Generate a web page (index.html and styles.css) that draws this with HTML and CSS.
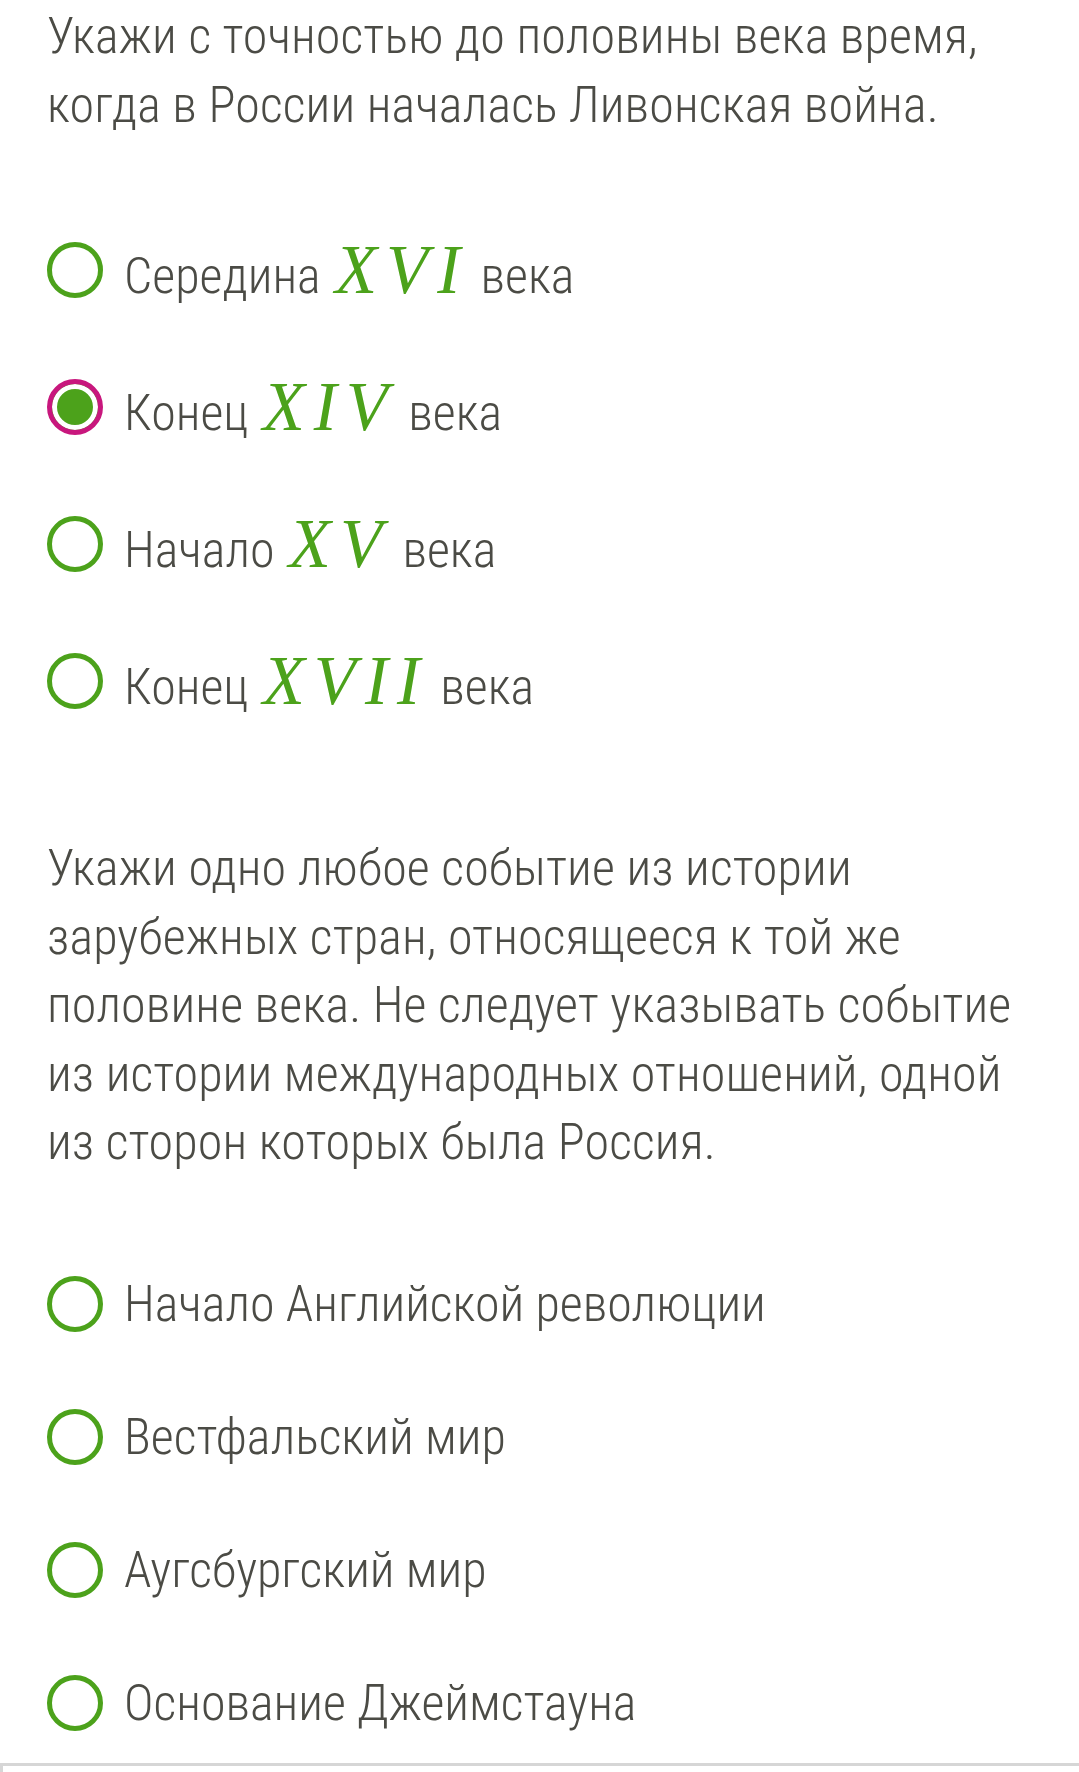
FILE: index.html
```html
<!DOCTYPE html>
<html lang="ru">
<head>
	<meta charset="UTF-8">
	<meta name="viewport" content="width=device-width,initial-scale=1">
	<title>Задание</title>
	<link rel="stylesheet" href="styles.css">
</head>
<body>
	<main class="task">
		<p class="question">Укажи с точностью до половины века время, когда в России началась Ливонская война.</p>

		<ul class="opts opts-math">
			<li class="opt"><span class="radio"></span><span class="label">Середина <span class="m">XVI</span> века</span></li>
			<li class="opt"><span class="radio checked"></span><span class="label">Конец <span class="m">XIV</span> века</span></li>
			<li class="opt"><span class="radio"></span><span class="label">Начало <span class="m">XV</span> века</span></li>
			<li class="opt"><span class="radio"></span><span class="label">Конец <span class="m">XVII</span> века</span></li>
		</ul>

		<p class="question q2">Укажи одно любое событие из истории зарубежных стран, относящееся к той же половине века. Не следует указывать событие из истории международных отношений, одной из сторон которых была Россия.</p>

		<ul class="opts opts-plain">
			<li class="opt"><span class="radio"></span><span class="label">Начало Английской революции</span></li>
			<li class="opt"><span class="radio"></span><span class="label">Вестфальский мир</span></li>
			<li class="opt"><span class="radio"></span><span class="label">Аугсбургский мир</span></li>
			<li class="opt"><span class="radio"></span><span class="label">Основание Джеймстауна</span></li>
		</ul>
	</main>

	<div class="field"></div>
</body>
</html>
```

FILE: styles.css
```css
html, body {
	margin: 0;
	background: #fff;
}

body {
	font-family: 'Roboto', 'Noto Sans', sans-serif;
	font-weight: 300;
	font-stretch: 87.5%;
	color: #4b4b45;
	overflow: hidden;
}

.task {
	padding: 2px 47px 0;
}

.question {
	margin: 0;
	font-size: 50px;
	line-height: 68.5px;
	letter-spacing: 0.15px;
}

.q2 {
	margin-top: 125px;
}

.opts {
	display: flex;
	flex-direction: column;
	margin: 0;
	padding: 0;
	list-style: none;
}

.opts-math {
	margin-top: 103px;
	gap: 81px;
}

.opts-plain {
	margin-top: 99px;
	gap: 77px;
}

.opt {
	display: flex;
	align-items: center;
	gap: 21px;
	height: 56px;
}

.radio {
	box-sizing: border-box;
	flex: none;
	width: 56px;
	height: 56px;
	border: 5px solid #4ca21b;
	border-radius: 50%;
}

.radio.checked {
	border-color: #c8177d;
	background: #4ca21b;
	box-shadow: inset 0 0 0 5px #fff;
}

.label {
	font-size: 50px;
	line-height: 56px;
	white-space: nowrap;
}

/* roman numerals set like formula text */
.m {
	font-family: 'Liberation Serif', 'DejaVu Serif', serif;
	font-style: italic;
	font-weight: 400;
	font-stretch: normal;
	font-size: 69px;
	line-height: 1;
	letter-spacing: 9px;
	padding-left: 3px;
	color: #4ca21b;
}

.field {
	height: 40px;
	margin-top: 32px;
	border: 3px solid #d6d6d6;
	border-right: 0;
	border-bottom: 0;
}
```
